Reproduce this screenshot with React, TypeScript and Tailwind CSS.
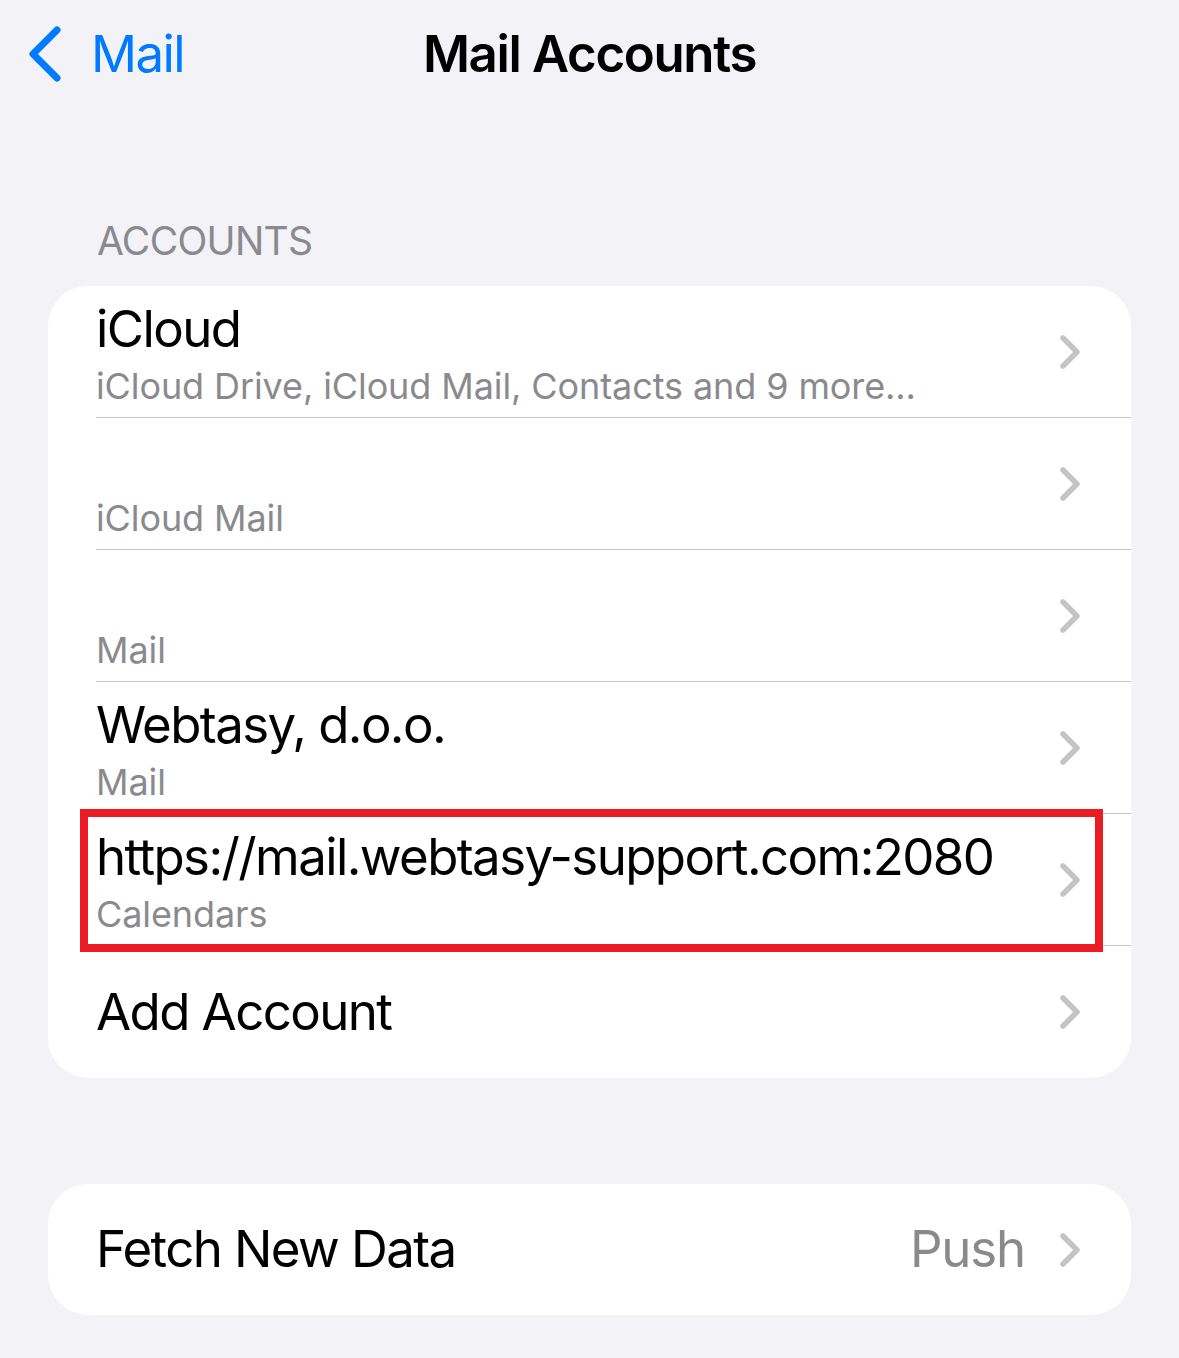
import React from "react";

const FONT = { fontFamily: "Inter, 'Noto Sans', sans-serif" };

function Chevron() {
  return (
    <svg width="22" height="36" viewBox="0 0 22 36" className="shrink-0">
      <path d="M4 4 L18 18 L4 32" fill="none" stroke="#c4c4c7" strokeWidth="5.5" strokeLinecap="round" strokeLinejoin="round" />
    </svg>
  );
}

type RowProps = {
  title?: string;
  subtitle?: string;
  last?: boolean;
  highlight?: boolean;
};

function AccountRow({ title, subtitle, last, highlight }: RowProps) {
  return (
    <div className="relative flex pl-[48px]">
      {highlight && (
        <div className="pointer-events-none absolute left-[32px] right-[28px] top-[-5px] bottom-[-6px] border-[8px] border-[#ed1c24] z-10" />
      )}
      <div className={`flex h-[132px] flex-1 items-center pr-[50px] ${last ? "" : "border-b border-[#c6c6c8]"}`}>
        {subtitle !== undefined ? (
          <div className="flex flex-1 flex-col self-start pt-[13px]">
            <div className="h-[60px] text-[51px] leading-[60px] text-black tracking-[-1.6px]">{title ?? ""}</div>
            <div className="text-[36px] leading-[55px] text-[#8a8a8e] tracking-[-0.1px]">{subtitle}</div>
          </div>
        ) : (
          <div className="flex-1 text-[51px] leading-[60px] text-black tracking-[-1.6px]">{title}</div>
        )}
        <Chevron />
      </div>
    </div>
  );
}

export default function App() {
  return (
    <div className="min-h-[1358px] w-[1179px] bg-[#f2f2f7]" style={FONT}>
      <div className="grid h-[108px] grid-cols-[1fr_auto_1fr] items-center">
        <div className="flex items-center pl-[28px]">
          <svg width="34" height="56" viewBox="0 0 34 56">
            <path d="M29 4 L5 28 L29 52" fill="none" stroke="#007aff" strokeWidth="7" strokeLinecap="round" strokeLinejoin="round" />
          </svg>
          <span className="ml-[29px] text-[51px] text-[#007aff] tracking-[-1.6px]">Mail</span>
        </div>
        <div className="text-[51px] font-semibold text-black tracking-[-1.35px]">Mail Accounts</div>
        <div />
      </div>

      <div className="px-[48px] pt-[108px]">
        <div className="pl-[49px] pb-[20px] text-[39px] leading-[50px] text-[#8a8a8e] tracking-[-0.7px]">ACCOUNTS</div>
        <div className="rounded-[40px] bg-white">
          <AccountRow title="iCloud" subtitle="iCloud Drive, iCloud Mail, Contacts and 9 more..." />
          <AccountRow subtitle="iCloud Mail" />
          <AccountRow subtitle="Mail" />
          <AccountRow title="Webtasy, d.o.o." subtitle="Mail" />
          <AccountRow title="https://mail.webtasy-support.com:2080" subtitle="Calendars" highlight />
          <AccountRow title="Add Account" last />
        </div>

        <div className="mt-[106px] flex h-[131px] items-center rounded-[40px] bg-white pl-[48px] pr-[50px]">
          <div className="flex-1 text-[51px] text-black tracking-[-1.6px]">Fetch New Data</div>
          <div className="mr-[34px] text-[51px] text-[#8a8a8e] tracking-[-1.2px]">Push</div>
          <Chevron />
        </div>
      </div>
    </div>
  );
}
